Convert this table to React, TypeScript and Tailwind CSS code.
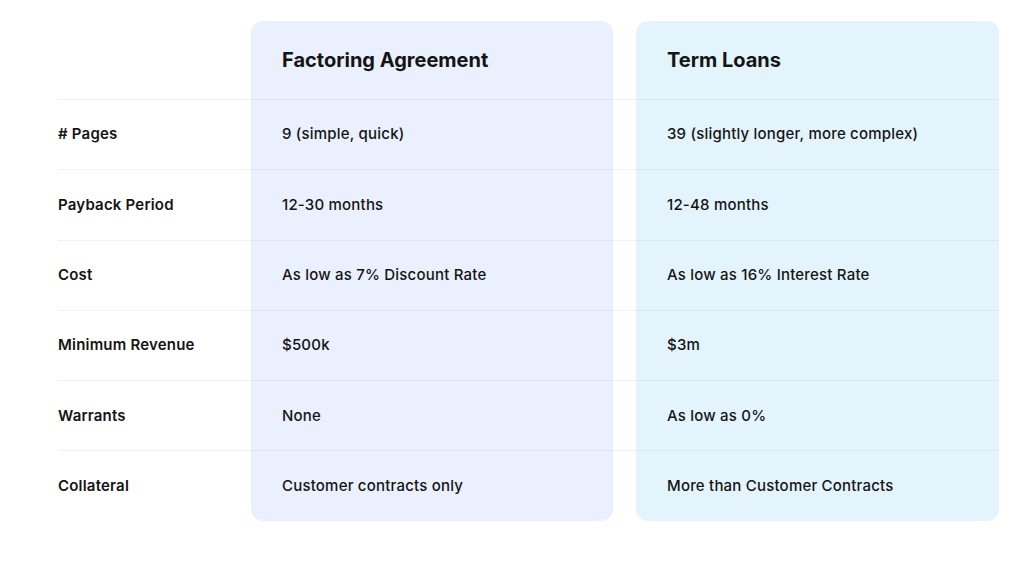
import React from "react";

const ROWS = [
  { label: "# Pages", a: "9 (simple, quick)", b: "39 (slightly longer, more complex)" },
  { label: "Payback Period", a: "12-30 months", b: "12-48 months" },
  { label: "Cost", a: "As low as 7% Discount Rate", b: "As low as 16% Interest Rate" },
  { label: "Minimum Revenue", a: "$500k", b: "$3m" },
  { label: "Warrants", a: "None", b: "As low as 0%" },
  { label: "Collateral", a: "Customer contracts only", b: "More than Customer Contracts" },
];

const line = "border-t border-[#0000000d]";

const App = () => {
  return (
    <div className="min-h-[563px] w-full bg-white pl-[58px] pt-[21px] text-[#141414] [font-family:Inter,'Noto_Sans',sans-serif]">
      <div className="grid grid-cols-[193px_362px_23px_363px]">
        {/* Header */}
        <div />
        <div className="flex h-[78px] items-center rounded-t-[12px] bg-[#eaf0fd] pl-[31px] text-[20px] font-bold">
          Factoring Agreement
        </div>
        <div />
        <div className="flex h-[78px] items-center rounded-t-[12px] bg-[#e4f4fd] pl-[31px] text-[20px] font-bold">
          Term Loans
        </div>

        {/* Rows */}
        {ROWS.map((r, i) => {
          const last = i === ROWS.length - 1;
          return (
            <React.Fragment key={r.label}>
              <div className={`flex h-[70.3px] items-center text-[15px] font-semibold tracking-[0.2px] ${line}`}>
                {r.label}
              </div>
              <div
                className={`flex h-[70.3px] items-center bg-[#eaf0fd] pl-[31px] text-[15px] font-medium tracking-[0.2px] ${line} ${last ? "rounded-b-[12px]" : ""}`}
              >
                {r.a}
              </div>
              <div className={line} />
              <div
                className={`flex h-[70.3px] items-center bg-[#e4f4fd] pl-[31px] text-[15px] font-medium tracking-[0.2px] ${line} ${last ? "rounded-b-[12px]" : ""}`}
              >
                {r.b}
              </div>
            </React.Fragment>
          );
        })}
      </div>
    </div>
  );
};

export default App;
